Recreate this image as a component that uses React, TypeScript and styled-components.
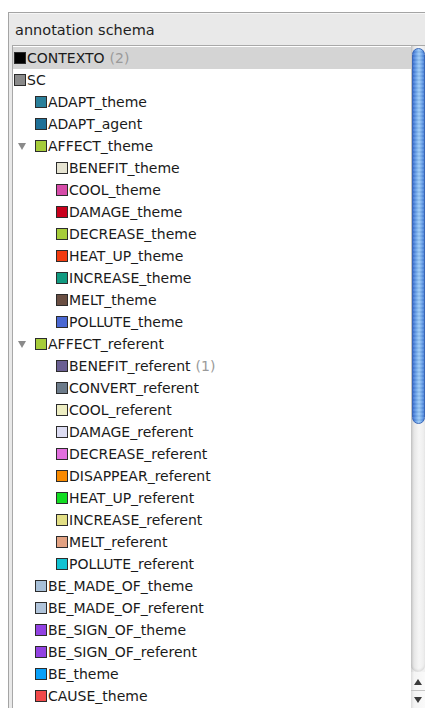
import styled, { createGlobalStyle } from 'styled-components';

const GlobalStyle = createGlobalStyle`
  html, body {
    margin: 0;
    padding: 0;
    background: #ffffff;
    overflow: hidden;
  }
  body {
    font-family: 'DejaVu Sans', 'Liberation Sans', sans-serif;
  }
`;

type Node = {
  label: string;
  color: string;
  level: number;
  count?: number;
  expanded?: boolean;
  selected?: boolean;
};

const nodes: Node[] = [
  { label: 'CONTEXTO', color: '#000000', level: 0, count: 2, selected: true },
  { label: 'SC', color: '#8a8a8a', level: 0 },
  { label: 'ADAPT_theme', color: '#2a7f9a', level: 1 },
  { label: 'ADAPT_agent', color: '#1f7097', level: 1 },
  { label: 'AFFECT_theme', color: '#a6cc3a', level: 1, expanded: true },
  { label: 'BENEFIT_theme', color: '#e6e4d2', level: 2 },
  { label: 'COOL_theme', color: '#d64ca8', level: 2 },
  { label: 'DAMAGE_theme', color: '#c8001c', level: 2 },
  { label: 'DECREASE_theme', color: '#a6cc3a', level: 2 },
  { label: 'HEAT_UP_theme', color: '#f23c10', level: 2 },
  { label: 'INCREASE_theme', color: '#119a80', level: 2 },
  { label: 'MELT_theme', color: '#6a4e42', level: 2 },
  { label: 'POLLUTE_theme', color: '#4a68d2', level: 2 },
  { label: 'AFFECT_referent', color: '#a6cc3a', level: 1, expanded: true },
  { label: 'BENEFIT_referent', color: '#6a5f92', level: 2, count: 1 },
  { label: 'CONVERT_referent', color: '#6c7b8a', level: 2 },
  { label: 'COOL_referent', color: '#ededc2', level: 2 },
  { label: 'DAMAGE_referent', color: '#dcdcf2', level: 2 },
  { label: 'DECREASE_referent', color: '#e270de', level: 2 },
  { label: 'DISAPPEAR_referent', color: '#f88a00', level: 2 },
  { label: 'HEAT_UP_referent', color: '#12dc22', level: 2 },
  { label: 'INCREASE_referent', color: '#e2de84', level: 2 },
  { label: 'MELT_referent', color: '#e2a282', level: 2 },
  { label: 'POLLUTE_referent', color: '#12c2d2', level: 2 },
  { label: 'BE_MADE_OF_theme', color: '#a8c0d8', level: 1 },
  { label: 'BE_MADE_OF_referent', color: '#b0c4da', level: 1 },
  { label: 'BE_SIGN_OF_theme', color: '#9242e2', level: 1 },
  { label: 'BE_SIGN_OF_referent', color: '#9242e2', level: 1 },
  { label: 'BE_theme', color: '#0aa0f8', level: 1 },
  { label: 'CAUSE_theme', color: '#f24a4a', level: 1 },
];

const Frame = styled.div`
  margin: 12px 0 0 8px;
  height: 696px;
  display: flex;
  flex-direction: column;
  background: #e9e9e9;
  border-top: 1px solid #a4a4a4;
  border-left: 1px solid #a4a4a4;
  box-sizing: border-box;
`;

const Title = styled.div`
  height: 31px;
  padding-left: 6px;
  display: flex;
  align-items: center;
  font-size: 14.5px;
  color: #1e1e1e;
  border-top: 1px solid #f6f6f6;
`;

const Panel = styled.div`
  flex: 1;
  margin-left: 3px;
  display: flex;
  min-height: 0;
  background: #ffffff;
  border-top: 1px solid #a8a8a8;
  border-left: 1px solid #a8a8a8;
`;

const List = styled.div`
  flex: 1;
  padding-top: 1px;
  overflow: hidden;
`;

const Row = styled.div<{ $selected?: boolean }>`
  height: 22px;
  display: flex;
  align-items: center;
  padding-left: 1px;
  font-size: 14px;
  color: #1a1a1a;
  white-space: nowrap;
  background: ${({ $selected }) => ($selected ? '#d4d4d4' : 'transparent')};
`;

const Indent = styled.span<{ $width: number }>`
  flex: none;
  width: ${({ $width }) => $width}px;
`;

const Toggle = styled.span`
  flex: none;
  width: 21px;
  height: 22px;
  display: flex;
  align-items: center;
  padding-left: 4px;
  box-sizing: border-box;

  &::before {
    content: '';
    border-left: 4px solid transparent;
    border-right: 4px solid transparent;
    border-top: 7px solid #8a8a8a;
  }
`;

const Swatch = styled.span<{ $color: string }>`
  flex: none;
  width: 10px;
  height: 10px;
  margin-right: 1px;
  background: ${({ $color }) => $color};
  border: 1px solid #2c2c2c;
`;

const Count = styled.span`
  color: #9a9a9a;
  margin-left: 5px;
`;

const Scrollbar = styled.div`
  flex: none;
  width: 14px;
  display: flex;
  flex-direction: column;
  background: linear-gradient(to right, #d0d0d0 0, #ededed 3px, #f8f8f8 7px, #f0f0f0 100%);
`;

const Track = styled.div`
  flex: 1;
  padding-top: 2px;
  border-radius: 0 0 7px 7px;
  background: linear-gradient(to right, #c4c4c4 0, #e6e6e6 3px, #f6f6f6 8px, #ececec 100%);
  box-shadow: inset 0 -2px 2px rgba(0, 0, 0, 0.08);
`;

const Thumb = styled.div`
  height: 376px;
  margin-left: 1px;
  border-radius: 7px;
  border: 1px solid #3a68b8;
  box-sizing: border-box;
  background:
    repeating-linear-gradient(to bottom, rgba(255, 255, 255, 0.08) 0 2px, rgba(0, 0, 0, 0.04) 2px 4px),
    linear-gradient(to right, #3c72d4 0%, #6ea6ec 30%, #9ccaf6 55%, #6ea6ec 80%, #4a82da 100%);
`;

const ArrowButton = styled.div<{ $down?: boolean }>`
  flex: none;
  height: 17px;
  display: flex;
  align-items: center;
  justify-content: center;
  border-top: 1px solid ${({ $down }) => ($down ? '#c4c4c4' : 'transparent')};
  background: linear-gradient(to right, #dcdcdc 0, #f4f4f4 3px, #fafafa 100%);

  &::before {
    content: '';
    border-left: 4px solid transparent;
    border-right: 4px solid transparent;
    ${({ $down }) =>
      $down ? 'border-top: 6px solid #3a3a3a;' : 'border-bottom: 6px solid #3a3a3a;'}
  }
`;

function TreeRow({ node }: { node: Node }) {
  const leading = node.level * 21;
  return (
    <Row $selected={node.selected}>
      {node.expanded ? (
        <>
          <Indent $width={leading - 21} />
          <Toggle />
        </>
      ) : (
        <Indent $width={leading} />
      )}
      <Swatch $color={node.color} />
      <span>{node.label}</span>
      {node.count !== undefined && <Count>({node.count})</Count>}
    </Row>
  );
}

export default function App() {
  return (
    <>
      <GlobalStyle />
      <Frame>
        <Title>annotation schema</Title>
        <Panel>
          <List>
            {nodes.map((node) => (
              <TreeRow key={node.label} node={node} />
            ))}
          </List>
          <Scrollbar>
            <Track>
              <Thumb />
            </Track>
            <ArrowButton />
            <ArrowButton $down />
          </Scrollbar>
        </Panel>
      </Frame>
    </>
  );
}
